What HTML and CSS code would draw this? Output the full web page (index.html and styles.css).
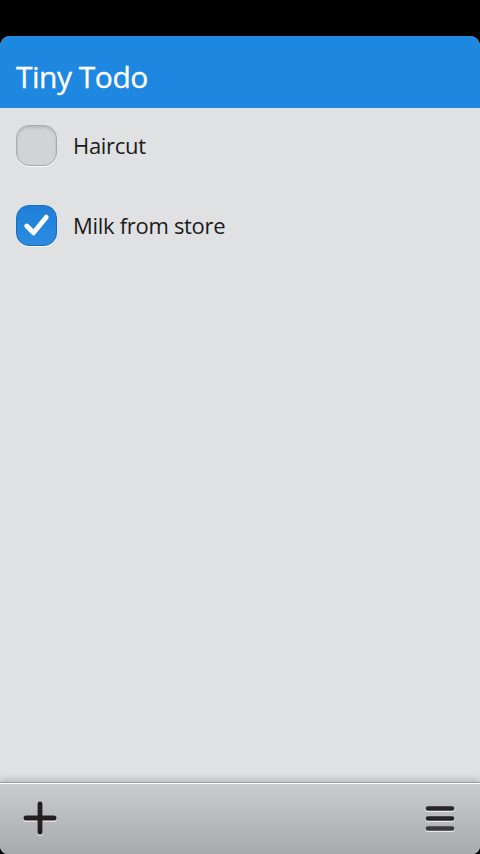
FILE: index.html
```html
<!DOCTYPE html>
<html>
<head>
<meta charset="utf-8">
<link rel="stylesheet" href="styles.css">
</head>
<body>
<div class="statusbar"></div>
<div class="window">
  <header class="header"><h1 class="title">Tiny Todo</h1></header>
  <main class="list">
    <div class="item">
      <span class="box"></span>
      <span class="label">Haircut</span>
    </div>
    <div class="item">
      <span class="box checked">
        <svg viewBox="0 0 40 40" width="40" height="40"><path d="M10 21 L17 28 L30 12" fill="none" stroke="#fff" stroke-width="5" stroke-linecap="round" stroke-linejoin="round"/></svg>
      </span>
      <span class="label">Milk from store</span>
    </div>
  </main>
  <footer class="toolbar">
    <span class="tool plus">
      <svg viewBox="0 0 36 36" width="36" height="36"><path d="M18 4 V32 M4 18 H32" stroke="#fff" stroke-width="5.5" stroke-linecap="round" transform="translate(0 1)" opacity="0.7"/><path d="M18 4 V32 M4 18 H32" stroke="#231f20" stroke-width="5" stroke-linecap="round"/></svg>
    </span>
    <span class="tool menu">
      <svg viewBox="0 0 32 28" width="32" height="28"><g stroke="#fff" stroke-width="5" stroke-linecap="round" opacity="0.7" transform="translate(0 1)"><path d="M4 4.5 H28 M4 14.5 H28 M4 24.5 H28"/></g><g stroke="#262426" stroke-width="4.6" stroke-linecap="round"><path d="M4 4.5 H28 M4 14.5 H28"/><path d="M4 24.5 H28" stroke="#3a3a3c"/></g></svg>
    </span>
  </footer>
</div>
</body>
</html>
```

FILE: styles.css
```css
* { box-sizing: border-box; }
html, body { margin: 0; padding: 0; background: #000; }
body {
  width: 480px;
  height: 854px;
  display: flex;
  flex-direction: column;
  font-family: "Open Sans", "DejaVu Sans", sans-serif;
}
.statusbar { height: 36px; background: #000; flex: none; }
.window {
  flex: 1;
  display: flex;
  flex-direction: column;
  background: #e0e1e3;
  border-radius: 10px 10px 8px 8px;
  overflow: hidden;
}
.header {
  height: 72px;
  background: #1e88e0;
  display: flex;
  align-items: center;
  padding: 0 16px;
  flex: none;
}
.title {
  margin: 0;
  color: #fff;
  font-weight: 400;
  font-size: 30px;
  letter-spacing: -0.5px;
  padding-top: 8px;
  -webkit-text-stroke: 0.3px #fff;
}
.list {
  flex: 1;
  padding: 16px 0 0 16px;
  display: flex;
  flex-direction: column;
  gap: 38px;
}
.item {
  display: flex;
  align-items: center;
  height: 42px;
}
.box {
  width: 41px;
  height: 41px;
  border-radius: 13px;
  background: #d2d3d5;
  border: 1px solid #a9aaac;
  box-shadow: inset 0 2px 3px rgba(0,0,0,0.12), 0 1px 0 #fafafa;
  display: flex;
  align-items: center;
  justify-content: center;
  flex: none;
}
.box.checked {
  background: linear-gradient(#1f7fd8, #2c8ce0);
  border-color: #1a6cbd;
  box-shadow: 0 1px 0 #fafafa;
}
.box svg { display: block; }
.label {
  margin-left: 16px;
  font-size: 22px;
  color: #1b1b1b;
  letter-spacing: -0.3px;
}
.toolbar {
  height: 71px;
  flex: none;
  display: flex;
  align-items: center;
  justify-content: space-between;
  padding: 0 24px 0 22px;
  border-top: 1px solid #fff;
  background: linear-gradient(#cacbcd, #a8aaac);
  box-shadow: 0 -1px 0 #9c9d9f, 0 -5px 5px rgba(0,0,0,0.13);
  position: relative;
}
.tool { display: flex; align-items: center; justify-content: center; }
.tool svg { display: block; }
.plus { margin-top: -2px; }
.menu { margin-top: -2px; }
```
